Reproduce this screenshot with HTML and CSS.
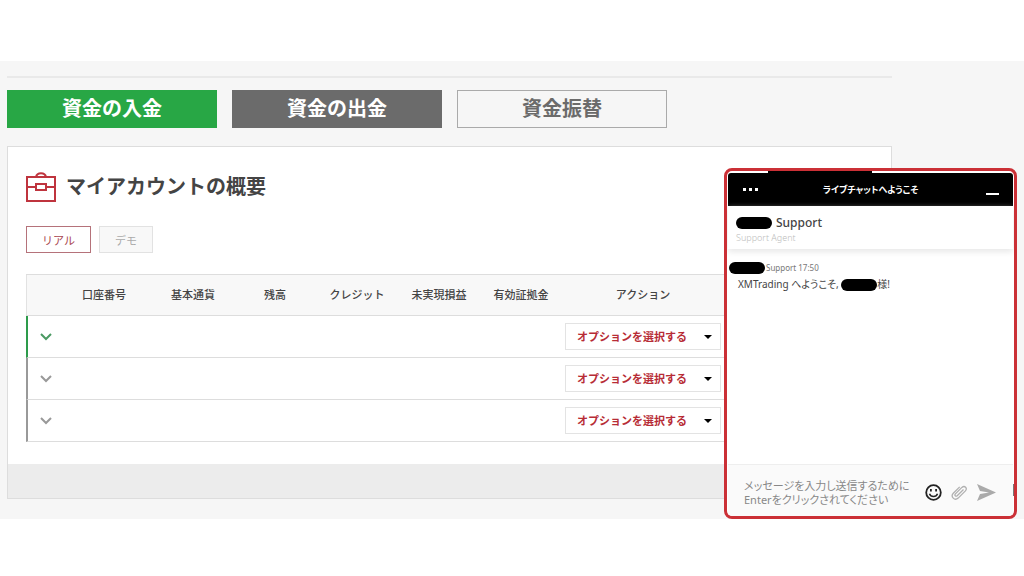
FILE: index.html
```html
<!DOCTYPE html>
<html lang="ja">
<head>
<meta charset="utf-8">
<meta name="viewport" content="width=device-width, initial-scale=1">
<title>マイアカウントの概要</title>
<link rel="stylesheet" href="styles.css">
</head>
<body>
<div class="band">
  <main class="content">
    <nav class="funds">
      <button class="fund fund-deposit" type="button">資金の入金</button>
      <button class="fund fund-withdraw" type="button">資金の出金</button>
      <button class="fund fund-transfer" type="button">資金振替</button>
    </nav>
    <section class="card">
      <div class="card-body">
        <header class="card-head">
          <svg class="case" viewBox="0 0 30 30" aria-hidden="true">
            <path d="M1 5h28v24H1zM1 15h9M20 15h9M10 12h10v6H10zM10 5c1-5 9-5 10 0"/>
          </svg>
          <h1 class="title">マイアカウントの概要</h1>
        </header>
        <div class="tabs">
          <button class="tab tab-active" type="button">リアル</button>
          <button class="tab" type="button">デモ</button>
        </div>
        <table class="accounts">
          <colgroup>
            <col class="c-toggle"><col class="c-number"><col class="c-wide"><col class="c-mid"><col class="c-wide"><col class="c-mid"><col class="c-wide"><col class="c-action"><col>
          </colgroup>
          <thead>
            <tr><th></th><th>口座番号</th><th>基本通貨</th><th>残高</th><th>クレジット</th><th>未実現損益</th><th>有効証拠金</th><th>アクション</th><th></th></tr>
          </thead>
          <tbody>
            <tr class="row-open">
              <td><button class="toggle" type="button" aria-label="詳細"><svg viewBox="0 0 12 8"><path d="M1 1l5 5 5-5"/></svg></button></td>
              <td></td><td></td><td></td><td></td><td></td><td></td>
              <td><div class="picker"><select class="select" aria-label="アクション"><option>オプションを選択する</option></select></div></td><td></td>
            </tr>
            <tr>
              <td><button class="toggle" type="button" aria-label="詳細"><svg viewBox="0 0 12 8"><path d="M1 1l5 5 5-5"/></svg></button></td>
              <td></td><td></td><td></td><td></td><td></td><td></td>
              <td><div class="picker"><select class="select" aria-label="アクション"><option>オプションを選択する</option></select></div></td><td></td>
            </tr>
            <tr>
              <td><button class="toggle" type="button" aria-label="詳細"><svg viewBox="0 0 12 8"><path d="M1 1l5 5 5-5"/></svg></button></td>
              <td></td><td></td><td></td><td></td><td></td><td></td>
              <td><div class="picker"><select class="select" aria-label="アクション"><option>オプションを選択する</option></select></div></td><td></td>
            </tr>
          </tbody>
        </table>
      </div>
      <footer class="card-foot"></footer>
    </section>
  </main>
  <aside class="chat">
    <span class="notch"></span>
    <header class="chat-bar">
      <button class="bar-btn" type="button" aria-label="メニュー"><svg width="18" height="4" viewBox="0 0 18 4"><path fill="#fff" d="M1 0h3v3H1zM7 0h3v3H7zM13 0h3v3h-3z"/></svg></button>
      <h2 class="chat-title">ライブチャットへようこそ</h2>
      <button class="bar-btn bar-min" type="button" aria-label="最小化"><svg width="13" height="2" viewBox="0 0 13 2"><path fill="#fff" d="M0 0h13v2H0z"/></svg></button>
    </header>
    <div class="agent">
      <div class="agent-name"><span class="mask"></span>Support</div>
      <div class="agent-role">Support Agent</div>
    </div>
    <div class="log">
      <div class="stamp"><span class="mask"></span>Support 17:50</div>
      <p class="message">XMTrading へようこそ, <span class="mask"></span>様!</p>
    </div>
    <form class="composer">
      <textarea class="entry" rows="2" aria-label="メッセージ" placeholder="メッセージを入力し送信するために&#10;Enterをクリックされてください"></textarea>
      <button class="tool" type="button" aria-label="絵文字"><svg width="17" height="17" viewBox="0 0 17 17" fill="none" stroke="#222" stroke-width="1.800"><circle cx="8.500" cy="8.500" r="7.300"/><path d="M4.500 9.800c1.300 3.600 6.700 3.600 8 0" stroke-width="1.500"/><path d="M5.900 5v2.400M11.100 5v2.400"/></svg></button>
      <button class="tool" type="button" aria-label="添付"><svg width="17" height="17" viewBox="0 0 17 17" fill="none" stroke="#b0b0b0" stroke-width="1.300"><path d="M12.500 5.500l-6.300 6.200c-1.400 1.200-3-.4-1.800-1.800l6.500-6.500c2.800-2.400 5.800.8 3.500 3.500l-7.200 7.200c-3.600 3.100-8-1.400-4.900-4.900L8.700 2.900"/></svg></button>
      <button class="tool" type="submit" aria-label="送信"><svg width="19" height="17" viewBox="0 0 19 17"><path fill="#aaa" d="M0 0l19 8.500L0 17l3-7 9-1.500L3 7z"/></svg></button>
    </form>
    <span class="thumb"></span>
  </aside>
</div>
</body>
</html>
```
FILE: styles.css
```css
* { box-sizing: border-box; }
body {
  margin: 0;
  padding: 61px 0 58px;
  background: #fff;
  color: #444;
  font-family: "Noto Sans", "Noto Sans CJK JP", sans-serif;
}
button, select, textarea { font-family: inherit; }
button { padding: 0; border: 0; background: none; }
.band {
  position: relative;
  padding: 15px 0 20px 7px;
  background: #f6f6f6;
}
.content {
  max-width: 885px;
  padding-top: 12px;
  border-top: 2px solid #e9e9e9;
}
.funds { display: flex; gap: 15px; margin-bottom: 18px; }
.fund {
  width: 210px;
  height: 38px;
  font-size: 20px;
  font-weight: 700;
  line-height: 24px;
  color: #fff;
}
.fund-deposit { background: #28a745; }
.fund-withdraw { background: #6b6b6b; }
.fund-transfer { border: 1px solid #aaa; color: #6b6b6b; }
.card { border: 1px solid #ddd; background: #fff; }
.card-body { padding: 25px 18px 22px; }
.card-head { display: flex; align-items: center; gap: 10px; }
.case { width: 30px; height: 30px; fill: none; stroke: #bf343e; stroke-width: 2; }
.title { margin: 0; font-size: 20px; line-height: 30px; font-weight: 700; }
.tabs { display: flex; gap: 8px; margin: 24px 0 21px; }
.tab {
  width: 54px;
  height: 27px;
  border: 1px solid #e2e2e2;
  background: #f8f8f8;
  color: #aaa;
  font-size: 11px;
}
.tab-active { width: 65px; border-color: #b5727a; background: #fff; color: #a8434d; }
.accounts {
  width: 100%;
  table-layout: fixed;
  border-spacing: 0;
  border-top: 1px solid #ddd;
}
.c-toggle { width: 32px; }
.c-number { width: 92px; }
.c-wide { width: 86px; }
.c-mid { width: 78px; }
.c-action { width: 158px; }
th, td { height: 42px; padding: 0; border-bottom: 1px solid #ddd; }
th { height: 41px; padding-bottom: 2px; background: #f8f8f8; font-size: 11px; font-weight: 500; }
th:first-child { border-left: 1px solid #e2e2e2; }
td:first-child { border-left: 2px solid #999; }
.row-open td:first-child { border-left-color: #2d9b4b; }
.toggle { display: block; width: 12px; height: 8px; margin-left: 12px; }
.toggle svg { display: block; width: 12px; height: 8px; fill: none; stroke: #999; stroke-width: 2; }
.row-open svg { stroke: #4b9a63; }
.picker { position: relative; width: 156px; margin: 0 auto; }
.picker::after {
  content: "";
  position: absolute;
  top: 12px;
  right: 9px;
  border: 4px solid transparent;
  border-top-color: #000;
  pointer-events: none;
}
.select {
  display: block;
  width: 100%;
  height: 27px;
  padding: 0 11px;
  appearance: none;
  border: 1px solid #e3e3e3;
  border-radius: 0;
  background: #fff;
  color: #b72c36;
  font-size: 11px;
  font-weight: 700;
}
.card-foot { height: 34px; background: #ececec; }

.chat {
  position: absolute;
  top: 107px;
  right: 7px;
  bottom: 0;
  display: flex;
  flex-direction: column;
  width: 293px;
  border: 3px solid #cb3036;
  border-radius: 8px;
  padding: 2px 1px 0;
  background: #fff;
  overflow: hidden;
}
.notch {
  position: absolute;
  top: 0;
  left: 41px;
  width: 104px;
  height: 4px;
  background: #000;
}
.chat-bar {
  display: flex;
  align-items: center;
  justify-content: space-between;
  height: 33px;
  padding: 0 14px;
  border-radius: 3px 3px 0 0;
  background: #000;
}
.bar-btn { display: flex; width: 20px; height: 24px; align-items: center; }
.bar-min { align-items: flex-end; justify-content: flex-end; padding-bottom: 7px; }
.chat-title {
  margin: 0;
  color: #fff;
  font-size: 9px;
  line-height: 16px;
  font-weight: 700;
  font-feature-settings: "palt";
}
.agent {
  padding: 8px 8px 5px;
  box-shadow: 0 3px 6px #e9e9e9;
}
.mask {
  display: inline-block;
  width: 36px;
  height: 12px;
  border-radius: 6px;
  background: #000;
  vertical-align: middle;
}
.agent-name { display: flex; align-items: center; gap: 4px; font-size: 12px; line-height: 18px; font-weight: 500; }
.agent-role { color: #bbb; font-size: 9px; line-height: 12px; font-weight: 300; }
.log { flex: 1; padding: 13px 1px; }
.stamp { display: flex; align-items: center; gap: 1px; color: #777; font-size: 8px; line-height: 12px; }
.message { margin: 2px 0 0 9px; font-size: 10px; line-height: 16px; font-feature-settings: "palt"; }
.composer {
  display: flex;
  align-items: center;
  gap: 9px;
  height: 52px;
  padding: 4px 17px 0 16px;
  border-top: 1px solid #eee;
  background: #fafafa;
}
.entry {
  flex: 1;
  min-width: 0;
  height: 28px;
  padding: 0;
  border: 0;
  outline: 0;
  resize: none;
  overflow: hidden;
  background: transparent;
  font-size: 11px;
  line-height: 14px;
  font-feature-settings: "palt";
}
.entry::placeholder { color: #888; }
.tool { display: flex; }
.thumb {
  position: absolute;
  right: 0;
  bottom: 20px;
  width: 1px;
  height: 12px;
  background: #777;
}
```
